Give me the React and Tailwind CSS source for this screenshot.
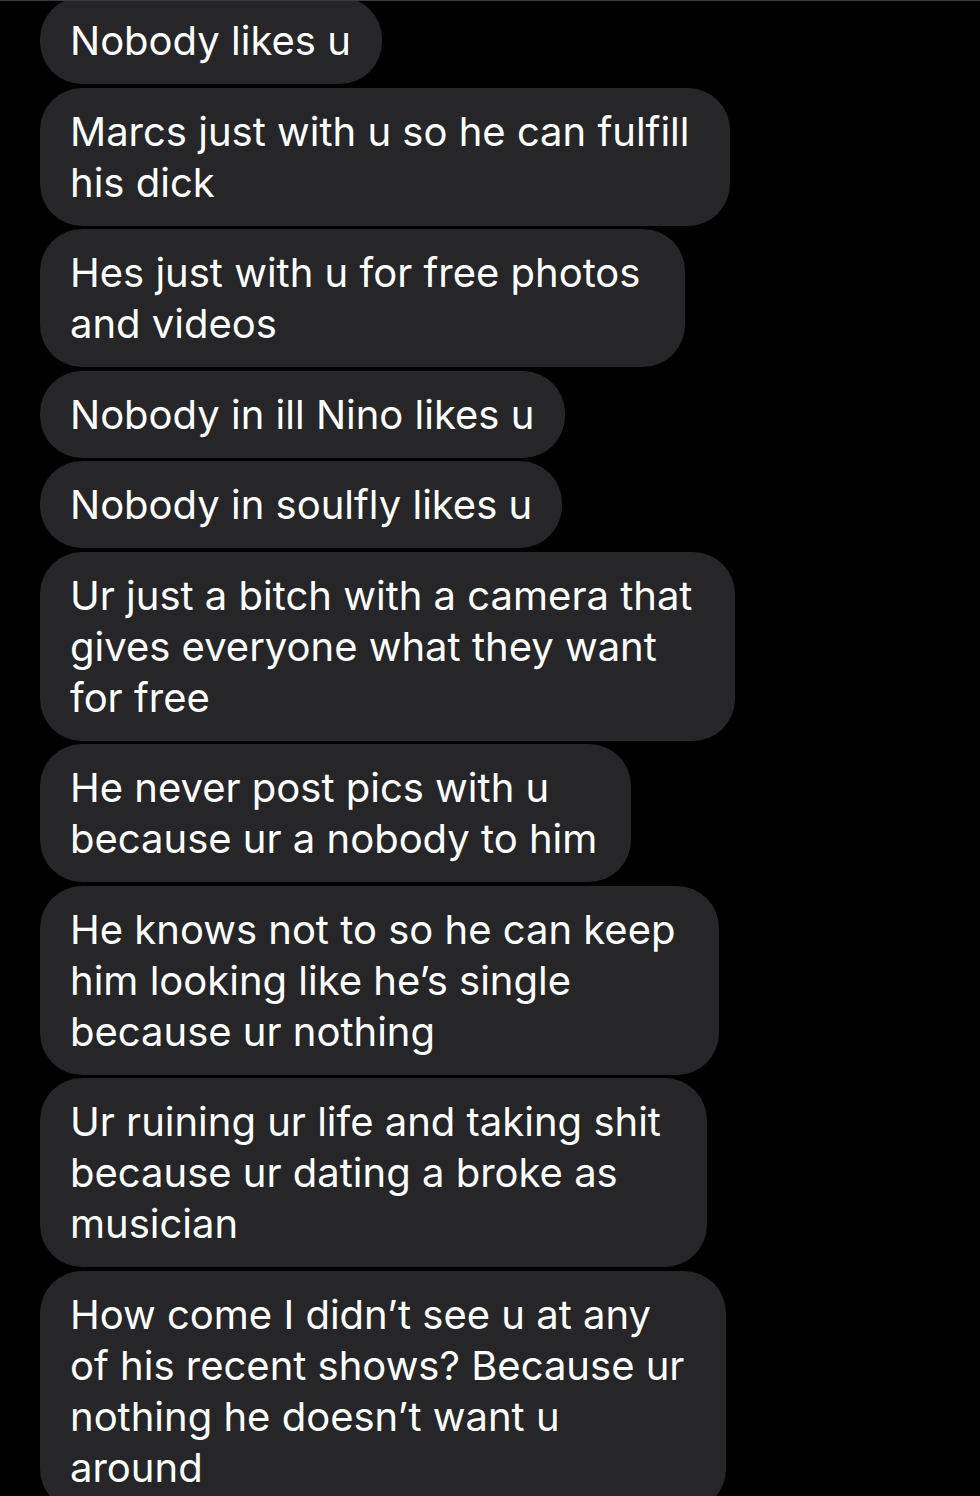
import React from "react";

// each message: lines as they wrap on the phone, plus the bubble width
const messages = [
  { w: "w-[342px]", lines: ["Nobody likes u"] },
  { w: "w-[690px]", lines: ["Marcs just with u so he can fulfill", "his dick"] },
  { w: "w-[645px]", lines: ["Hes just with u for free photos", "and videos"] },
  { w: "w-[525px]", lines: ["Nobody in ill Nino likes u"] },
  { w: "w-[522px]", lines: ["Nobody in soulfly likes u"] },
  {
    w: "w-[695px]",
    lines: ["Ur just a bitch with a camera that", "gives everyone what they want", "for free"],
  },
  { w: "w-[591px]", lines: ["He never post pics with u", "because ur a nobody to him"] },
  {
    w: "w-[679px]",
    lines: ["He knows not to so he can keep", "him looking like he\u2019s single", "because ur nothing"],
  },
  {
    w: "w-[667px]",
    lines: ["Ur ruining ur life and taking shit", "because ur dating a broke as", "musician"],
  },
  {
    w: "w-[686px]",
    lines: [
      "How come I didn\u2019t see u at any",
      "of his recent shows? Because ur",
      "nothing he doesn\u2019t want u",
      "around",
    ],
  },
];

const Bubble = ({ w, lines }) => (
  <div className={`${w} shrink-0 rounded-[42px] bg-[#262628] pl-[30px] py-[18px]`}>
    {lines.map((line, i) => (
      <div key={i} className="whitespace-nowrap">
        {line}
      </div>
    ))}
  </div>
);

export default function App() {
  return (
    <div className="h-[1496px] w-[980px] overflow-hidden bg-black border-t border-[#3a3a3c]">
      <div
        className="-mt-[4px] flex flex-col gap-[3.5px] pl-10 text-[40px] leading-[51px] text-white"
        style={{ fontFamily: "Inter, 'Noto Sans', sans-serif" }}
      >
        {messages.map((m, i) => (
          <Bubble key={i} {...m} />
        ))}
      </div>
    </div>
  );
}
